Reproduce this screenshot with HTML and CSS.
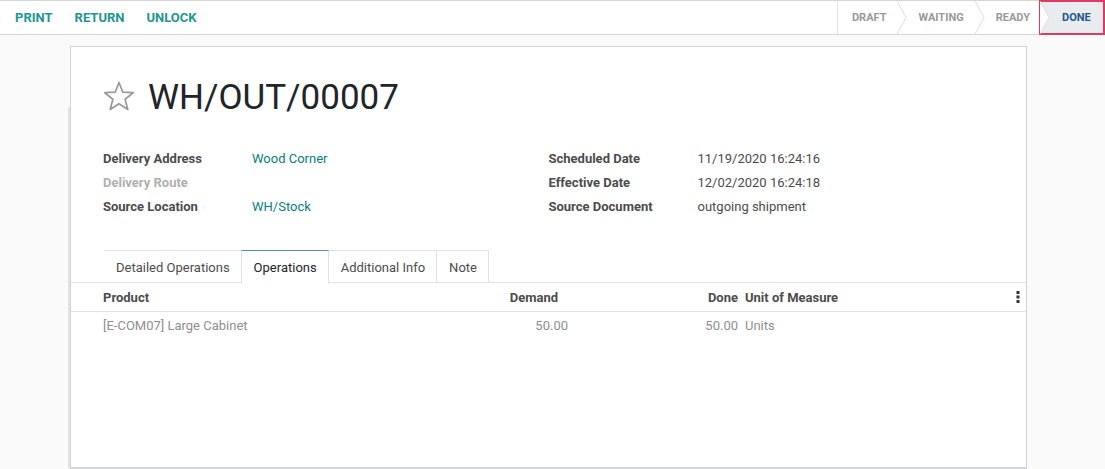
FILE: index.html
```html
<!DOCTYPE html>
<html>
<head>
<meta charset="utf-8">
<link rel="stylesheet" href="styles.css">
</head>
<body>
<div class="control">
  <div class="buttons">
    <span class="btn">PRINT</span>
    <span class="btn">RETURN</span>
    <span class="btn">UNLOCK</span>
  </div>
  <div class="status">
    <span class="st">DRAFT</span>
    <svg class="sep" width="10" height="33" viewBox="0 0 10 33"><polyline points="0,0 9,16.5 0,33" fill="#fff" stroke="#dadde2" stroke-width="1"/></svg>
    <span class="st st-mid">WAITING</span>
    <svg class="sep" width="10" height="33" viewBox="0 0 10 33"><polyline points="0,0 9,16.5 0,33" fill="#fff" stroke="#dadde2" stroke-width="1"/></svg>
    <span class="st st-mid st-ready">READY</span>
    <div class="done-wrap">
      <svg class="sep sep-done" width="10" height="33" viewBox="0 0 10 33"><polyline points="0,0 9,16.5 0,33" fill="#fff" stroke="#dadde2" stroke-width="1"/></svg>
      <span class="st st-done">DONE</span>
    </div>
  </div>
</div>

<div class="content">
  <div class="sheet">
    <div class="title">
      <svg class="star" width="32" height="30" viewBox="0 0 33 31"><polygon points="16.5,1.5 20.4,11.6 31.2,12.1 22.8,18.9 25.6,29.4 16.5,23.5 7.4,29.4 10.2,18.9 1.8,12.1 12.6,11.6" fill="none" stroke="#9a9a9a" stroke-width="1.8" stroke-linejoin="round"/></svg>
      <h1>WH/OUT/00007</h1>
    </div>

    <div class="groups">
      <div class="group">
        <div class="row"><span class="lbl">Delivery Address</span><span class="val link">Wood Corner</span></div>
        <div class="row"><span class="lbl lbl-muted">Delivery Route</span><span class="val"></span></div>
        <div class="row"><span class="lbl">Source Location</span><span class="val link">WH/Stock</span></div>
      </div>
      <div class="group">
        <div class="row"><span class="lbl">Scheduled Date</span><span class="val">11/19/2020 16:24:16</span></div>
        <div class="row"><span class="lbl">Effective Date</span><span class="val">12/02/2020 16:24:18</span></div>
        <div class="row"><span class="lbl">Source Document</span><span class="val">outgoing shipment</span></div>
      </div>
    </div>

    <div class="tabs">
      <span class="tab">Detailed Operations</span>
      <span class="tab active">Operations</span>
      <span class="tab">Additional Info</span>
      <span class="tab">Note</span>
    </div>

    <div class="table">
      <div class="tr th">
        <span class="c c-prod">Product</span>
        <span class="c c-num c-dem-h">Demand</span>
        <span class="c c-num">Done</span>
        <span class="c c-uom">Unit of Measure</span>
        <span class="c c-kebab"><svg width="4" height="12" viewBox="0 0 4 12"><rect x="0.5" y="0" width="3" height="3" fill="#333"/><rect x="0.5" y="4.5" width="3" height="3" fill="#333"/><rect x="0.5" y="9" width="3" height="3" fill="#333"/></svg></span>
      </div>
      <div class="tr td">
        <span class="c c-prod">[E-COM07] Large Cabinet</span>
        <span class="c c-num">50.00</span>
        <span class="c c-num">50.00</span>
        <span class="c c-uom">Units</span>
        <span class="c c-kebab"></span>
      </div>
    </div>
  </div>
</div>
</body>
</html>
```

FILE: styles.css
```css
* { box-sizing: border-box; }
html, body { margin: 0; padding: 0; }
body {
  background: #fafafa;
  font-family: Roboto, "Liberation Sans", sans-serif;
  font-size: 13px;
  color: #4c4c4c;
  height: 469px;
  overflow: hidden;
}

.control {
  height: 35px;
  background: #fff;
  border-top: 1px solid #d6d6d6;
  border-bottom: 1px solid #d6d6d6;
  display: flex;
  justify-content: space-between;
  align-items: stretch;
}
.buttons {
  display: flex;
  align-items: center;
  padding-left: 15px;
  gap: 22px;
}
.btn {
  color: #1e968f;
  font-weight: 700;
  font-size: 13px;
}

.status {
  display: flex;
  align-items: stretch;
  border-left: 1px solid #dee2e6;
}
.st {
  display: flex;
  align-items: center;
  color: #999;
  font-weight: 700;
  font-size: 11px;
  padding: 0 10px 0 14px;
  white-space: nowrap;
}
.st-mid { padding-left: 12px; padding-right: 11px; }
.st-ready { padding-left: 11px; padding-right: 10px; }
.sep { display: block; flex: none; }
.done-wrap {
  display: flex;
  align-items: stretch;
  background: #e9ecef;
  border: 2px solid #dd3b66;
  margin-top: -1px;
  margin-bottom: -1px;
  margin-left: -1px;
  width: 66px;
}
.sep-done { margin-top: -1px; margin-left: -1px; }
.st-done {
  color: #22568b;
  padding: 0 0 0 12px;
}

.content {
  padding: 11px 0 0 70px;
}
.sheet {
  width: 957px;
  height: 422px;
  background: #fff;
  border: 1px solid #d3d3d3;
  box-shadow: 0 2px 0 #d5d7dc, -3px 60px 0 -1px #e4e4e4;
  padding: 28px 32px 0 32px;
}

.title {
  display: flex;
  align-items: center;
  gap: 13px;
  height: 44px;
}
.star { display: block; margin-top: -2px; }
.title h1 {
  margin: 0;
  font-size: 35px;
  font-weight: 400;
  color: #212529;
}

.groups {
  display: grid;
  grid-template-columns: 1fr 1fr;
  margin-top: 27px;
}
.row {
  display: flex;
  height: 24px;
  align-items: center;
}
.lbl {
  width: 149px;
  font-weight: 700;
  color: #4c4c4c;
}
.lbl-muted { color: #b0b0b0; }
.val { color: #4c4c4c; }
.link { color: #087f7b; }

.tabs {
  display: flex;
  margin: 32px -32px 0 -32px;
  padding-left: 33px;
  border-bottom: 1px solid #dee2e6;
  height: 33px;
}
.tab {
  display: flex;
  align-items: center;
  padding: 0 11px 0 12px;
  white-space: nowrap;
  color: #4c4c4c;
  border-top: 1px solid #dee2e6;
  border-right: 1px solid #dee2e6;
  margin-bottom: -1px;
  height: 33px;
}
.tab.active {
  color: #212529;
  background: #fff;
  border-top: 1px solid #5a8aad;
  border-left: 1px solid #dee2e6;
  margin-left: -1px;
  height: 34px;
}

.table { margin: 0 -32px; }
.tr {
  display: grid;
  grid-template-columns: 369px 100px 170px 1fr 16px;
  padding-left: 32px;
  align-items: center;
}
.th {
  height: 29px;
  border-bottom: 1px solid #dee2e6;
  font-weight: 700;
  color: #4c4c4c;
}
.td {
  height: 26px;
  color: #8f8f8f;
}
.c { white-space: nowrap; }
.c-num { text-align: right; padding-right: 4px; }
.c-dem-h { padding-right: 14px; }
.c-uom { padding-left: 3px; }
.c-kebab { display: flex; justify-content: flex-start; padding-left: 6px; }
.c-kebab svg { display: block; }
```
